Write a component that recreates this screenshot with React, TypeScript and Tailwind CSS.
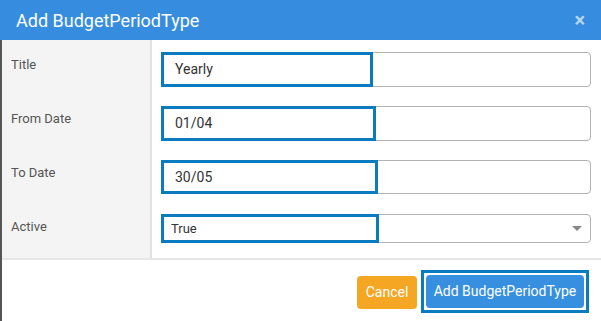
const rows = [
  { label: "Title", value: "Yearly", focus: 212, h: "h-[35px]", kind: "input" },
  { label: "From Date", value: "01/04", focus: 215, h: "h-[35px]", kind: "input" },
  { label: "To Date", value: "30/05", focus: 217, h: "h-[34px]", kind: "input" },
  { label: "Active", value: "True", focus: 218, h: "h-[29px]", kind: "select" },
];

export default function App() {
  return (
    <div className="flex h-[321px] w-[601px] flex-col bg-white font-['Roboto','Liberation_Sans',sans-serif]">
      {/* Header */}
      <div className="flex h-[40px] shrink-0 items-center justify-between bg-[#368ddf] pl-[16px] pr-[16px]">
        <h2 className="text-[18px] text-white">Add BudgetPeriodType</h2>
        <span className="text-[20px] font-bold leading-none text-[#b9d6f4]">×</span>
      </div>

      {/* Body */}
      <div className="flex flex-1 flex-col border-l-2 border-[#555]">
        <div className="flex border-b-2 border-[#e6e6e6]">
          <div className="w-[150px] shrink-0 border-r-2 border-[#e2e2e2] bg-[#f4f4f4]">
            {rows.map((r) => (
              <div key={r.label} className="h-[54px] pl-[9px] pt-[16px] text-[13px] leading-[18px] text-[#555]">
                {r.label}
              </div>
            ))}
            <div className="h-[2px]" />
          </div>
          <div className="flex-1 pl-[9px] pr-[10px]">
            {rows.map((r) => (
              <div key={r.label} className="h-[54px] pt-[12px]">
                <div className={`relative flex items-center rounded-[4px] border border-[#b3b3b3] ${r.h}`}>
                  {r.kind === "input" ? (
                    <span className="pl-[13px] text-[14px] text-[#333]">{r.value}</span>
                  ) : (
                    <>
                      <span className="pl-[9px] text-[13px] text-[#333]">{r.value}</span>
                      <span className="ml-auto mr-[8px] h-0 w-0 border-x-[5px] border-t-[5px] border-x-transparent border-t-[#888]" />
                    </>
                  )}
                  <div
                    className="absolute -left-px -top-px -bottom-px border-[3px] border-[#0a7bbf]"
                    style={{ width: r.focus }}
                  />
                </div>
              </div>
            ))}
            <div className="h-[2px]" />
          </div>
        </div>

        {/* Footer */}
        <div className="flex flex-1 items-start justify-end gap-[4px] pr-[12px] pt-[10px]">
          <button className="mt-[6px] h-[33px] w-[60px] rounded-[4px] bg-[#f5a623] text-[14px] text-white">
            Cancel
          </button>
          <div className="border-[3px] border-[#0a7bbf] p-[2px]">
            <button className="h-[33px] w-[158px] rounded-[4px] bg-[#378fe0] text-[14px] text-white">
              Add BudgetPeriodType
            </button>
          </div>
        </div>
      </div>
    </div>
  );
}
